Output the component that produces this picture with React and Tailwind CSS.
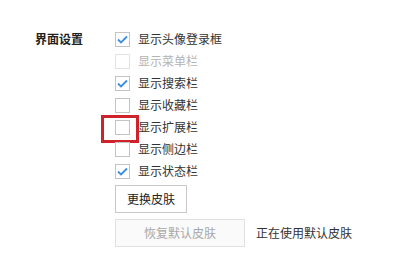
import React from 'react';

const options = [
    { label: '显示头像登录框', checked: true },
    { label: '显示菜单栏', checked: false, disabled: true },
    { label: '显示搜索栏', checked: true },
    { label: '显示收藏栏', checked: false },
    { label: '显示扩展栏', checked: false, marked: true },
    { label: '显示侧边栏', checked: false },
    { label: '显示状态栏', checked: true },
];

const CheckBox = ({ checked, disabled, marked }) => (
    <div className="relative">
        <div
            className={
                'w-[15px] h-[15px] border bg-white flex items-center justify-center ' +
                (disabled ? 'border-[#e3e3e3]' : 'border-[#c4c4c4]')
            }
        >
            {checked && (
                <svg width="11" height="9" viewBox="0 0 11 9">
                    <polyline
                        points="1,4.5 4,7.5 10,1.5"
                        fill="none"
                        stroke="#3d8de0"
                        strokeWidth="1.8"
                    />
                </svg>
            )}
        </div>
        {/* red annotation box */}
        {marked && (
            <div className="absolute left-[-14px] top-[-5px] w-[38px] h-[28px] border-[3px] border-[#d0222a]"></div>
        )}
    </div>
);

export default function App() {
    return (
        <div
            className="w-[397px] h-[274px] bg-white flex pt-[28px] pl-[35px] text-[12px] text-[#333]"
            style={{ fontFamily: '"Noto Sans CJK SC", "Microsoft YaHei", sans-serif' }}
        >
            <div className="w-[80px] h-[22px] leading-[22px] font-bold text-[#222]">界面设置</div>
            <div className="flex flex-col">
                {options.map((o) => (
                    <div key={o.label} className="h-[22px] flex items-center gap-[8px]">
                        <CheckBox checked={o.checked} disabled={o.disabled} marked={o.marked} />
                        <span className={o.disabled ? 'text-[#b4b4b4]' : 'text-[#333]'}>{o.label}</span>
                    </div>
                ))}
                <div className="mt-[3px]">
                    <button className="h-[28px] w-[72px] border border-[#c8c8c8] bg-white text-[#222] text-[12px]">
                        更换皮肤
                    </button>
                </div>
                <div className="mt-[6px] flex items-center gap-[11px]">
                    <button
                        disabled
                        className="h-[28px] w-[130px] border border-[#e0e0e0] bg-[#fafafa] text-[#a8a8a8] text-[12px]"
                    >
                        恢复默认皮肤
                    </button>
                    <span className="text-[#333]">正在使用默认皮肤</span>
                </div>
            </div>
        </div>
    );
}
